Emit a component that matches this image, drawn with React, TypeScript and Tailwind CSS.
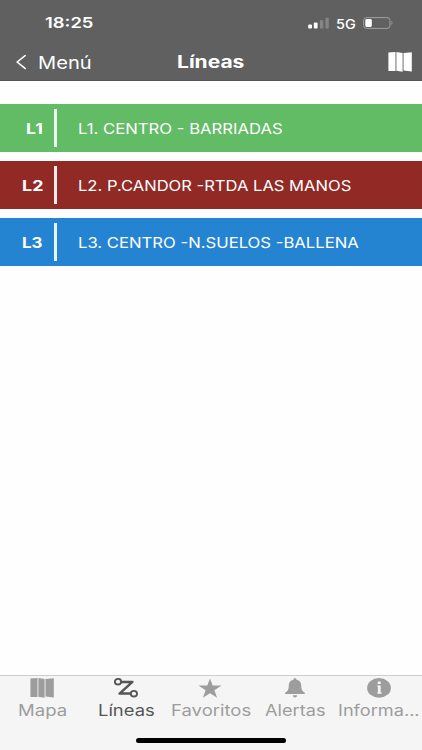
import { useLayoutEffect, useRef, useState } from "react";

type WideTextProps = { children: string; width: number; className?: string };

/* Text stretched horizontally to an exact width. */
function WideText({ children, width, className = "" }: WideTextProps) {
  const ref = useRef<HTMLSpanElement>(null);
  const [scale, setScale] = useState(1);
  useLayoutEffect(() => {
    if (ref.current) setScale(width / ref.current.offsetWidth);
  }, [width, children]);
  return (
    <span className="block shrink-0" style={{ width }}>
      <span
        ref={ref}
        className={`block w-max origin-left whitespace-nowrap ${className}`}
        style={{ transform: `scaleX(${scale})` }}
      >
        {children}
      </span>
    </span>
  );
}

function MapIcon({ className }: { className: string }) {
  return (
    <svg viewBox="0 0 24 20" preserveAspectRatio="none" fill="currentColor" className={className}>
      <path d="M.4.5 7.5.1v18.8L.4 18.9ZM8.4.1l6.2 1v18.6l-6.2-1ZM15.5 1.1 23.8.2v19.2l-8.3-.8Z" />
    </svg>
  );
}

function RouteIcon() {
  return (
    <svg viewBox="0 0 24 20" fill="none" stroke="currentColor" className="h-5 w-6">
      <ellipse cx="4" cy="3.7" rx="3.1" ry="2.8" strokeWidth="1.9" />
      <ellipse cx="19.9" cy="15.7" rx="3.1" ry="2.8" strokeWidth="1.9" />
      <path d="M7.3 3.9H18.4L5.6 15.6H16.4" strokeWidth="2.5" strokeLinejoin="round" />
    </svg>
  );
}

function StarIcon() {
  return (
    <svg viewBox="0 0 24 20" fill="currentColor" className="h-5 w-6">
      <path d="m12 .5 2.7 7.1h8.8l-7.1 4.7 2.7 7.4-7.1-4.5-7.1 4.5 2.7-7.4L.5 7.6h8.8Z" />
    </svg>
  );
}

function BellIcon() {
  return (
    <svg viewBox="0 0 24 20" fill="currentColor" className="h-5 w-6">
      <path d="M12 .3c-.9 0-1.5.5-1.5 1.4C7.2 2.4 5.8 4.7 5.8 7.5c0 3.8-.9 5.6-3.6 7.3v1.1h19.6v-1.1c-2.7-1.7-3.6-3.5-3.6-7.3 0-2.8-1.4-5.1-4.7-5.8 0-.9-.6-1.4-1.5-1.4Z" />
      <path d="M9.9 17.2h4.2c0 1.4-.8 2.2-2.1 2.2s-2.1-.8-2.1-2.2Z" />
    </svg>
  );
}

function InfoIcon() {
  return (
    <svg viewBox="0 0 24 20" className="h-5 w-6">
      <ellipse cx="12" cy="9.9" rx="11.9" ry="9.8" fill="currentColor" />
      <path d="M10.7 3.4h3v2.7h-3ZM10.3 7.5h3.4v7h1v1.3h-4.4v-1.3h.6V8.8h-.6Z" fill="#f5f5f5" />
    </svg>
  );
}

const lines = [
  { id: "L1", idW: 17, name: "L1. CENTRO - BARRIADAS", w: 205, color: "bg-[#62bb65]" },
  { id: "L2", idW: 21, name: "L2. P.CANDOR -RTDA LAS MANOS", w: 273, color: "bg-[#912a25]" },
  { id: "L3", idW: 21, name: "L3. CENTRO -N.SUELOS -BALLENA", w: 280.5, color: "bg-[#2484d2]" },
];

const tabs = [
  { label: "Mapa", w: 49, icon: <MapIcon className="h-5 w-6" /> },
  { label: "Líneas", w: 57, icon: <RouteIcon />, active: true },
  { label: "Favoritos", w: 80, icon: <StarIcon /> },
  { label: "Alertas", w: 61, icon: <BellIcon /> },
  { label: "Informa...", w: 82, icon: <InfoIcon /> },
];

export default function App() {
  return (
    <div className="flex h-[750px] w-[422px] flex-col overflow-hidden bg-[#fefefe] font-['Inter',sans-serif]">
      <header className="h-[81px] shrink-0 border-b border-[#555] bg-[#606060] text-white">
        <div className="flex h-[46px] items-center pl-[45px] pr-[28px]">
          <WideText width={49} className="text-[15px] leading-5 font-semibold">18:25</WideText>
          <div className="ml-auto flex items-center">
            <svg viewBox="0 0 22 12" fill="currentColor" className="h-3 w-[22px]">
              <rect x="0.2" y="7.4" width="3.8" height="4.2" rx="1" />
              <rect x="5.8" y="5.4" width="3.8" height="6.2" rx="1" />
              <rect x="11.9" y="2.9" width="3.4" height="8.7" rx="1" fill="#858585" />
              <rect x="17.4" y="0.8" width="3.4" height="10.8" rx="1" fill="#858585" />
            </svg>
            <div className="ml-[6px] pt-px">
              <WideText width={20} className="text-[13px] leading-5 font-medium">5G</WideText>
            </div>
            <svg viewBox="0 0 31 12" fill="none" className="ml-[7px] h-3 w-[31px]">
              <rect x="0.6" y="0.6" width="26.4" height="10.8" rx="3" stroke="#a0a0a0" />
              <rect x="2.3" y="2" width="6.5" height="8" rx="1.4" fill="white" />
              <path d="M28.5 4v4c1.2-.5 1.2-3.5 0-4Z" fill="#a0a0a0" />
            </svg>
          </div>
        </div>
        <div className="grid h-8 grid-cols-3 items-center pl-[16px] pr-[10px]">
          <div className="flex items-center">
            <svg viewBox="0 0 11 15" fill="none" stroke="currentColor" strokeWidth="1.5" className="h-[15px] w-[11px]">
              <path d="M9.7.2 1.2 7l8.5 6.8" />
            </svg>
            <div className="ml-[10.5px] pt-px">
              <WideText width={54} className="text-[17.5px] leading-6 font-[380]">Menú</WideText>
            </div>
          </div>
          <div className="flex justify-center pr-[6px]">
            <WideText width={68} className="text-[17px] leading-6 font-bold">Líneas</WideText>
          </div>
          <div className="flex justify-end">
            <MapIcon className="h-5 w-6" />
          </div>
        </div>
      </header>

      <main className="flex flex-1 flex-col gap-[9.5px] pt-[23.3px] text-white">
        {lines.map((l) => (
          <div key={l.id} className={`flex h-[47.5px] shrink-0 items-center ${l.color}`}>
            <div className="flex w-[43px] shrink-0 justify-end pt-px">
              <WideText width={l.idW} className="text-[14.5px] leading-5 font-bold">{l.id}</WideText>
            </div>
            <div className="ml-[11px] h-[38px] w-[2.5px] bg-white/90" />
            <div className="ml-[21px] pt-px">
              <WideText width={l.w} className="text-[14.5px] leading-5 font-[370]">{l.name}</WideText>
            </div>
          </div>
        ))}
      </main>

      <nav className="flex h-[75px] shrink-0 flex-col items-center border-t border-[#cecece] bg-[#f5f5f5]">
        <div className="grid w-full grid-cols-5 pt-[2px] pr-px">
          {tabs.map((t) => (
            <div key={t.label} className={`flex flex-col items-center ${t.active ? "text-[#565656]" : "text-[#9d9d9d]"}`}>
              <div className="h-5">{t.icon}</div>
              <div className="mt-px pl-px">
                <WideText width={t.w} className="text-[15.5px] leading-6">{t.label}</WideText>
              </div>
            </div>
          ))}
        </div>
        <div className="mt-[15px] h-[5px] w-[150px] rounded-full bg-black" />
      </nav>
    </div>
  );
}
